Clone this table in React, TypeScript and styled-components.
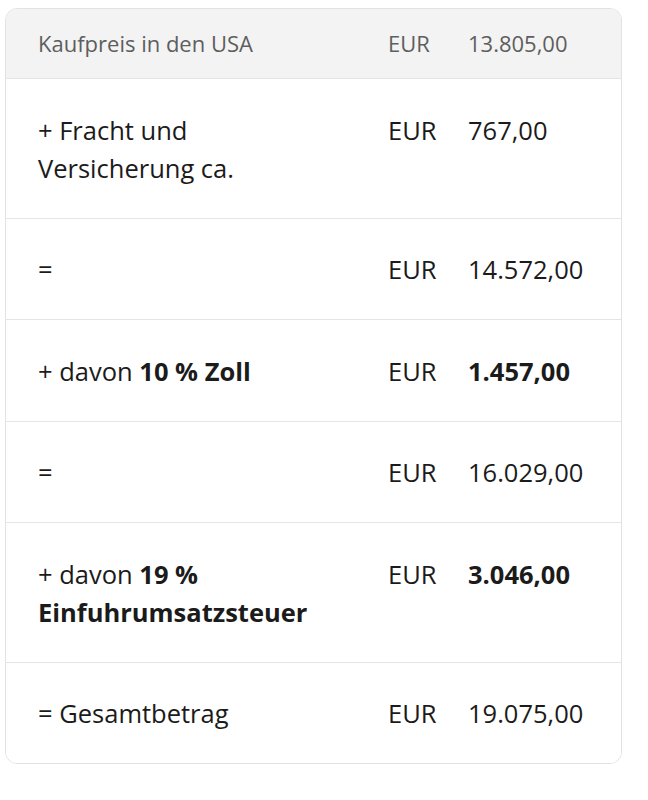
import styled, { createGlobalStyle } from 'styled-components';

const GlobalStyle = createGlobalStyle`
  body {
    margin: 0;
    background: #ffffff;
    font-family: "Open Sans", "Noto Sans", sans-serif;
    color: #1b1b1b;
  }
`

const Card = styled.div`
  margin: 8px 0 0 5px;
  width: 617px;
  box-sizing: border-box;
  border: 1.5px solid #e2e2e2;
  border-radius: 12px;
  overflow: hidden;
  background: #ffffff;
`

const Row = styled.div<{ $head?: boolean }>`
  display: grid;
  grid-template-columns: 350px 80px 1fr;
  align-items: start;
  padding: ${p => (p.$head ? '20px 0 20px 32px' : '31.5px 0 31px 32px')};
  background: ${p => (p.$head ? '#f3f3f3' : '#ffffff')};
  color: ${p => (p.$head ? '#5e5e5e' : '#1b1b1b')};
  font-size: ${p => (p.$head ? '22px' : '25.5px')};
  line-height: ${p => (p.$head ? '29px' : '38px')};
  & + & {
    border-top: 1.5px solid #e4e4e4;
  }
`

const Label = styled.div`
  padding-right: 66px;
  b {
    font-weight: 700;
  }
`

const Currency = styled.div``

const Amount = styled.div<{ $bold?: boolean }>`
  font-weight: ${p => (p.$bold ? 700 : 400)};
`

interface Line {
  label: React.ReactNode;
  amount: string;
  bold?: boolean;
}

const lines: Line[] = [
  { label: '+ Fracht und Versicherung ca.', amount: '767,00' },
  { label: '=', amount: '14.572,00' },
  { label: <>+ davon <b>10 % Zoll</b></>, amount: '1.457,00', bold: true },
  { label: '=', amount: '16.029,00' },
  { label: <>+ davon <b>19 % Einfuhrumsatzsteuer</b></>, amount: '3.046,00', bold: true },
  { label: '= Gesamtbetrag', amount: '19.075,00' },
]

const App = () => {
  return (
    <>
      <GlobalStyle />
      <Card>
        <Row $head>
          <Label>Kaufpreis in den USA</Label>
          <Currency>EUR</Currency>
          <Amount>13.805,00</Amount>
        </Row>
        {lines.map((line, index) => (
          <Row key={index}>
            <Label>{line.label}</Label>
            <Currency>EUR</Currency>
            <Amount $bold={line.bold}>{line.amount}</Amount>
          </Row>
        ))}
      </Card>
    </>
  )
}

export default App
